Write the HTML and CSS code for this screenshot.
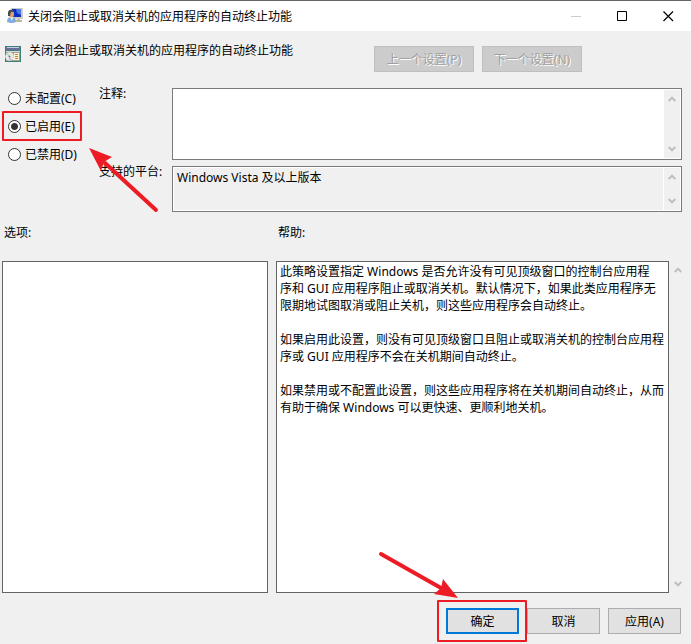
FILE: index.html
```html
<!DOCTYPE html>
<html lang="zh-CN">

<head>
    <meta charset="UTF-8">
    <meta name="viewport" content="width=device-width, initial-scale=1.0">
    <title>关闭会阻止或取消关机的应用程序的自动终止功能</title>
    <link rel="stylesheet" href="styles.css">
</head>

<body>
    <svg class="symbols" aria-hidden="true">
        <symbol id="chevron-up" viewBox="0 0 8 6">
            <path d="M0.7 5 L4 1.7 L7.3 5" fill="none" stroke="#bfbfbf" stroke-width="2" />
        </symbol>
        <symbol id="chevron-down" viewBox="0 0 8 6">
            <path d="M0.7 1 L4 4.3 L7.3 1" fill="none" stroke="#bfbfbf" stroke-width="2" />
        </symbol>
    </svg>

    <header class="titlebar">
        <svg class="icon" viewBox="0 0 16 16" aria-hidden="true">
            <path d="M4 0 H16 V11 H4 Z" fill="#cfcdc2" />
            <path d="M5 1 H14 V9 H5 Z" fill="#0a2fc0" />
            <path d="M9 1 H14 V7 L10 5 Z" fill="#4a78ea" />
            <path d="M10 11 H13 V12 H15 V14 H8 V12 H10 Z" fill="#b9b7a8" />
            <path d="M0 14 Q0 9 4 9 Q9 9 9 14 Q5 16 0 14 Z" fill="#7fabdc" />
            <path d="M3 9 L5 13 L6 9 Z" fill="#eef5fc" />
            <ellipse cx="4.500" cy="6" rx="2.500" ry="3.500" fill="#d9a577" />
            <path d="M1 8 V4 Q2 1 5 2 L7 4 L4 4 L3 8 Z" fill="#4d4a4c" />
        </svg>
        <h1 class="titlebar-text">关闭会阻止或取消关机的应用程序的自动终止功能</h1>
        <div class="window-controls">
            <button type="button" aria-label="最小化" disabled>
                <svg viewBox="0 0 11 11"><path d="M0 5.500 H10" stroke="#cccccc" /></svg>
            </button>
            <button type="button" aria-label="最大化">
                <svg viewBox="0 0 11 11"><path d="M0.500 0.500 H9.500 V9.500 H0.500 Z" fill="none" stroke="#000" /></svg>
            </button>
            <button type="button" aria-label="关闭">
                <svg viewBox="0 0 11 11"><path d="M0.500 0.500 L10 10 M10 0.500 L0.500 10" stroke="#000" stroke-width="1.200" /></svg>
            </button>
        </div>
    </header>

    <form class="policy">
        <div class="policy-header">
            <svg class="icon" viewBox="0 0 16 16" aria-hidden="true">
                <path d="M0 0 H16 V16 H0 Z" fill="#3f7f7c" />
                <path d="M1 1 H15 V4 H1 Z" fill="#6a6c9c" />
                <path d="M2 1 H14 V2 H2 Z" fill="#c9c9e2" />
                <path d="M1 5 H15 V15 H1 Z" fill="#a2a39e" />
                <path d="M1 5 H15 V6 H1 Z" fill="#d6d6d2" />
                <circle cx="4.500" cy="10.500" r="4.300" fill="#e9e9ea" />
                <path d="M4.500 10.500 L1 8 L3 6.500 Z" fill="#b4dcb4" />
                <path d="M4.500 10.500 L7 14 L4 14.500 Z" fill="#c7b6d9" />
                <circle cx="4.500" cy="10.500" r="1" fill="#777" />
                <path d="M9 7 H14 V14 H8 V12 H9 Z" fill="#fff3d0" />
                <path d="M10 8.500 H13 M10 10.500 H13 M10 12.500 H13" stroke="#b48a50" />
            </svg>
            <h2 class="policy-name">关闭会阻止或取消关机的应用程序的自动终止功能</h2>
            <button type="button" class="nav-button" disabled>上一个设置(P)</button>
            <button type="button" class="nav-button" disabled>下一个设置(N)</button>
        </div>

        <div class="settings">
            <div class="states" role="radiogroup" aria-label="状态">
                <label class="state"><input type="radio" name="state">未配置(C)</label>
                <label class="state highlighted">
                    <input type="radio" name="state" checked>已启用(E)
                    <svg class="arrow arrow-state" viewBox="0 0 72 66" aria-hidden="true">
                        <path d="M67 62 L16 15" stroke="#ed1c24" stroke-width="4" stroke-linecap="round" />
                        <path d="M0 0 L23 9 L15 14 L12 23 Z" fill="#ed1c24" />
                    </svg>
                </label>
                <label class="state"><input type="radio" name="state">已禁用(D)</label>
            </div>

            <div class="fields">
                <label class="field-label" for="comment">注释:</label>
                <div class="field comment-field">
                    <textarea id="comment"></textarea>
                    <div class="scrollbar">
                        <svg><use href="#chevron-up" /></svg>
                        <svg><use href="#chevron-down" /></svg>
                    </div>
                </div>

                <label class="field-label" for="platform">支持的平台:</label>
                <div class="field platform-field">
                    <textarea id="platform" readonly>Windows Vista 及以上版本</textarea>
                    <div class="scrollbar">
                        <svg><use href="#chevron-up" /></svg>
                        <svg><use href="#chevron-down" /></svg>
                    </div>
                </div>
            </div>
        </div>

        <div class="panels">
            <section class="panel options">
                <h3>选项:</h3>
                <div class="panel-box"></div>
            </section>
            <section class="panel help">
                <h3>帮助:</h3>
                <div class="help-body">
                    <div class="panel-box">
                        <p>此策略设置指定 Windows 是否允许没有可见顶级窗口的控制台应用程<br>序和 GUI 应用程序阻止或取消关机。默认情况下，如果此类应用程序无<br>限期地试图取消或阻止关机，则这些应用程序会自动终止。</p>
                        <p>如果启用此设置，则没有可见顶级窗口且阻止或取消关机的控制台应用程序或 GUI 应用程序不会在关机期间自动终止。</p>
                        <p>如果禁用或不配置此设置，则这些应用程序将在关机期间自动终止，从而有助于确保 Windows 可以更快速、更顺利地关机。</p>
                    </div>
                    <div class="scrollbar">
                        <svg><use href="#chevron-up" /></svg>
                        <svg><use href="#chevron-down" /></svg>
                    </div>
                </div>
            </section>
        </div>

        <footer class="actions">
            <div class="ok-wrap">
                <button type="submit" class="action primary">确定</button>
                <svg class="arrow arrow-ok" viewBox="0 0 82 50" aria-hidden="true">
                    <path d="M4 4 L64 38" stroke="#ed1c24" stroke-width="4" stroke-linecap="round" />
                    <path d="M81 48 L66 29 L64 38 L57 44 Z" fill="#ed1c24" />
                </svg>
            </div>
            <button type="button" class="action">取消</button>
            <button type="button" class="action">应用(A)</button>
        </footer>
    </form>
</body>

</html>
```

FILE: styles.css
```css
*,
*::before {
    box-sizing: border-box;
}

body {
    margin: 0;
    min-height: 100vh;
    display: flex;
    flex-direction: column;
    background-color: #f0f0f0;
    border-top: 1px solid #666;
    color: #000;
}

body,
button,
textarea {
    font-family: "Noto Sans", "Noto Sans CJK SC", sans-serif;
    font-size: 12px;
    line-height: 17px;
}

h1,
h2,
h3,
p {
    margin: 0;
    font-size: 12px;
    font-weight: normal;
}

.symbols {
    display: none;
}

.icon {
    width: 16px;
    height: 16px;
    flex: none;
}

/* title bar */
.titlebar {
    display: flex;
    align-items: center;
    height: 30px;
    padding-left: 7px;
    background-color: #fff;
}

.titlebar-text {
    flex: 1;
    padding-left: 5px;
}

.window-controls {
    display: flex;
}

.window-controls button {
    display: flex;
    align-items: center;
    justify-content: center;
    width: 46px;
    height: 30px;
    padding: 0;
    border: none;
    background: none;
}

.window-controls svg {
    width: 11px;
    height: 11px;
}

/* policy name and navigation */
.policy {
    flex: 1;
    display: flex;
    flex-direction: column;
}

.policy-header {
    display: flex;
    gap: 8px;
    padding: 15px 109px 12px 5px;
}

.policy-name {
    flex: 1;
    line-height: 10px;
}

.nav-button {
    width: 100px;
    height: 26px;
    padding: 0;
    border: 1px solid #bfbfbf;
    background-color: #ccc;
    color: #a0a0a0;
    text-shadow: 1px 1px #fff;
}

/* state and fields */
.settings {
    display: flex;
    padding-right: 9px;
}

.states {
    display: flex;
    flex-direction: column;
    align-items: flex-start;
    width: 99px;
    padding-left: 2px;
}

.state {
    position: relative;
    display: flex;
    align-items: center;
    gap: 4px;
    height: 28px;
    padding-left: 6px;
}

.state input {
    appearance: none;
    width: 13px;
    height: 13px;
    margin: 0;
    border: 1px solid #333;
    border-radius: 50%;
    background-color: #fff;
}

.state input:checked {
    background-image: radial-gradient(circle, #333 3px, transparent 4px);
}

.highlighted::before {
    content: "";
    position: absolute;
    top: -1px;
    left: 0;
    width: 80px;
    height: 30px;
    border: 2px solid #ed1c24;
    border-radius: 1px;
}

.arrow {
    position: absolute;
    fill: none;
    z-index: 1;
}

.arrow-state {
    top: 36px;
    left: 87px;
    width: 72px;
    height: 66px;
}

.fields {
    flex: 1;
    display: grid;
    grid-template-columns: 73px 1fr;
    row-gap: 6px;
    margin-top: 4px;
}

.field-label {
    margin-top: -3px;
}

.field {
    display: flex;
    padding: 1px;
    border: 1px solid #7a7a7a;
    background-color: #fff;
}

.comment-field {
    height: 72px;
}

.platform-field {
    height: 46px;
}

.field textarea {
    flex: 1;
    min-width: 0;
    margin: 0;
    padding: 1px 3px;
    border: none;
    outline: none;
    resize: none;
    overflow: hidden;
    background-color: transparent;
}

.platform-field textarea {
    margin-right: 1px;
    background-color: #f0f0f0;
}

.scrollbar {
    flex: none;
    display: flex;
    flex-direction: column;
    align-items: center;
    justify-content: space-between;
    width: 16px;
    padding: 6px 0;
    background-color: #f0f0f0;
}

.scrollbar svg {
    width: 8px;
    height: 6px;
}

/* options and help */
.panels {
    flex: 1;
    display: grid;
    grid-template-columns: 266fr 410fr;
    gap: 8px;
    padding: 12px 5px 0 2px;
}

.panel {
    display: flex;
    flex-direction: column;
}

.panel h3 {
    padding-left: 2px;
    margin-bottom: 20px;
}

.panel-box {
    flex: 1;
    border: 1px solid #646464;
    background-color: #fff;
}

.help-body {
    flex: 1;
    display: flex;
    gap: 1px;
}

.help .panel-box {
    padding: 1px 3px;
}

.help p {
    margin-bottom: 17px;
}

/* dialog buttons */
.actions {
    display: flex;
    justify-content: flex-end;
    gap: 8px;
    padding: 15px 10px 10px;
}

.action {
    width: 73px;
    height: 26px;
    padding: 0;
    border: 1px solid #adadad;
    background-color: #e1e1e1;
}

.action.primary {
    border: 2px solid #0078d7;
}

.ok-wrap {
    position: relative;
}

.ok-wrap::before {
    content: "";
    position: absolute;
    top: -8px;
    left: -9px;
    width: 90px;
    height: 42px;
    border: 2px solid #ed1c24;
    border-radius: 1px;
    pointer-events: none;
}

.arrow-ok {
    top: -58px;
    left: -69px;
    width: 82px;
    height: 50px;
}
```
